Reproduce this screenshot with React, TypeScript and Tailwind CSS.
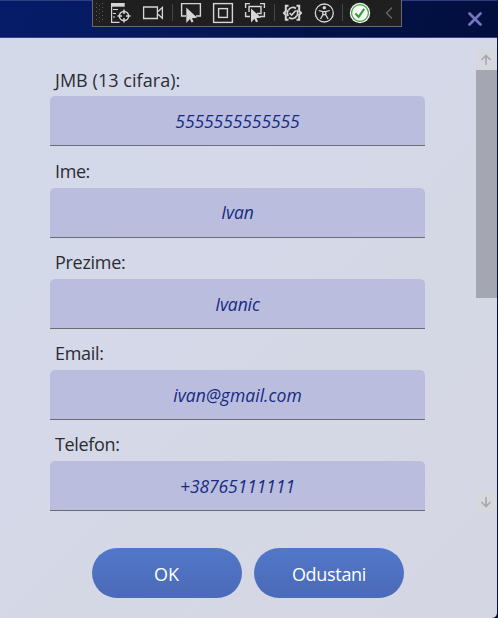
import React from "react";

const fields = [
  { label: "JMB (13 cifara):", value: "5555555555555", labelTrack: "tracking-[0.05px] mb-[3px]", valueTrack: "tracking-[-0.08px] pt-px", height: "h-[92px]" },
  { label: "Ime:", value: "Ivan", labelTrack: "tracking-[-0.4px] -mt-px mb-1", valueTrack: "tracking-[-0.1px]", height: "h-[91px]" },
  { label: "Prezime:", value: "Ivanic", labelTrack: "tracking-[-0.3px] -mt-px mb-1", valueTrack: "tracking-[-0.1px] pt-px", height: "h-[91px]" },
  { label: "Email:", value: "ivan@gmail.com", labelTrack: "tracking-[-0.3px] -mt-px mb-1", valueTrack: "tracking-[0.05px] pt-px", height: "h-[91px]" },
  { label: "Telefon:", value: "+38765111111", labelTrack: "tracking-[-0.35px] -mt-px mb-1", valueTrack: "tracking-[-0.08px] pt-px", height: "h-[91px]" },
];

function DebugToolbar() {
  return (
    <div className="absolute -top-px left-[92px] h-[27px] w-[310px] border-x border-b border-[#69686c] bg-[#1f1f1f]">
      <svg className="absolute -left-px top-0" width="310" height="25" viewBox="92 0 310 25" fill="none" stroke="#d6d6d6">
        {/* drag grip */}
        <path d="M96.500 3v20M102.500 3v20" stroke="#5e5e5e" strokeDasharray="1 3" />
        <path d="M99.500 5v18" stroke="#5e5e5e" strokeDasharray="1 3" />
        {/* live visual tree */}
        <path d="M111 3h13.700v3.700H111z" fill="#d6d6d6" stroke="none" />
        <path d="M111.600 4v18.400h7.900" strokeWidth="1.200" />
        <path d="M113 9.500h5M113 13.500h3M113 17h2" strokeWidth="1.200" />
        <circle cx="124" cy="16" r="4.600" strokeWidth="1.500" />
        <path d="M124 9.500v4.500M124 18v4.500M117.500 16h4.500M126 16h4.500" strokeWidth="1.500" />
        {/* camera */}
        <path d="M143.600 7h13.800v11.500h-13.800z" strokeWidth="1.300" />
        <path d="M158 11.500l4.400-4v10.800l-4.400-4" strokeWidth="1.300" />
        <path d="M172.500 4v17" stroke="#464646" />
        {/* element picker */}
        <path d="M186 16h-4.400V3.600h18.800V16H196" strokeWidth="1.400" />
        <path d="M186.300 7.500v15.500l3.700-4 1.500 3.600 2-.8-1.500-3.600 5.200-.4z" fill="#d6d6d6" stroke="none" />
        {/* layout adorners */}
        <rect x="213.600" y="3.600" width="18.800" height="18.800" strokeWidth="1.400" />
        <rect x="218.600" y="8.600" width="8.800" height="8.800" strokeWidth="1.400" />
        {/* focus tracking */}
        <path d="M245.600 8V3.600h4.400M260 3.600h4.400V8M264.400 12v4.500H260M250 16.500h-4.400V12" strokeWidth="1.400" />
        <path d="M249 12V6.500h12v7h-4" strokeWidth="1.400" />
        <path d="M251 8.500v14l3.400-3.800 1.600 3.500 2-.8-1.500-3.500 4.800-.2z" fill="#d6d6d6" stroke="none" />
        <path d="M274.500 4v17" stroke="#464646" />
        {/* hot reload */}
        <path d="M288.500 5.700h-2.700v5.300l-1.800 2 1.800 2v4.700h2.700M296.500 5.700h2.700v5.300l1.800 2-1.800 2v4.700h-2.700" strokeWidth="2" />
        <path d="M288.500 10a5 5 0 0 1 7.500-1.500M296.500 16a5 5 0 0 1-7.500 1.500M288.200 10a5.500 5.500 0 0 0 0 6M296.800 10a5.500 5.500 0 0 1 0 6" strokeWidth="1.600" />
        <path d="M289.500 13l2.200 2 4-4.500" strokeWidth="1.600" />
        {/* accessibility */}
        <circle cx="324.300" cy="13" r="9" strokeWidth="1.300" />
        <circle cx="324.300" cy="7.700" r="1.700" fill="#d6d6d6" stroke="none" />
        <path d="M318.800 10.500l4 1.200h3l4-1.200M322.800 11.700v3.300L320.500 19M325.800 11.700v3.300l2.300 4M322.800 14.500h3" strokeWidth="1.300" />
        <path d="M342.500 4v17" stroke="#464646" />
        <circle cx="360" cy="13" r="10.200" fill="#f5f8f5" stroke="none" />
        <circle cx="360" cy="13" r="8.400" stroke="#3d9b3c" strokeWidth="1.200" />
        <path d="M355.300 13.500l3.400 3.400 5.500-8" stroke="#319b32" strokeWidth="2" />
        <path d="M392 7.500l-5.500 5.500 5.500 5.500" stroke="#686868" strokeWidth="1.300" />
      </svg>
    </div>
  );
}

function Arrow({ down = false }: { down?: boolean }) {
  return (
    <div className="flex h-5 w-[21px] items-center bg-[#d7d8de] pl-1">
      <svg width="12" height="12" viewBox="0 0 12 12" fill="none" stroke="#a6a8b1" strokeWidth="1.600" className={down ? "rotate-180" : ""}>
        <path d="M6 11V2M1.500 6L6 1.500 10.500 6" />
      </svg>
    </div>
  );
}

export default function App() {
  return (
    <div className="h-[618px] w-[498px] overflow-hidden bg-[#020f43] pr-px font-['Open_Sans','Noto_Sans',sans-serif]">
      <div className="flex h-full flex-col overflow-hidden rounded-br-[5px] bg-[linear-gradient(135deg,#d4d9ea_0%,#d4d9e9_25%,#d5d8e8_45%,#d4d8e4_65%,#d5d7e5_78%,#d5d6e3_100%)]">
        <header className="relative flex h-[38px] shrink-0 items-center justify-end border-b border-t border-b-[#35457f] border-t-[#2e3e7e] bg-[linear-gradient(100deg,#061c6a_0%,#051a60_25%,#021248_65%,#020e3d_100%)] pr-[15px]">
          <DebugToolbar />
          <svg width="14" height="14" viewBox="0 0 14 14" fill="none" stroke="#7773c2" strokeWidth="2.700" strokeLinecap="round">
            <path d="M1.500 1.500l11 11M12.500 1.500l-11 11" />
          </svg>
        </header>
        <main className="mt-3 flex h-[462px] shrink-0 justify-between pl-[50px]">
          <div className="w-[375px] pt-[18px]">
            {fields.map((f) => (
              <div key={f.label} className={`flex flex-col ${f.height}`}>
                <div className={`pl-[5px] text-[18px] leading-[25px] text-[#2b2c32] ${f.labelTrack}`}>{f.label}</div>
                <div className={`flex h-[50px] shrink-0 items-center justify-center rounded-t-[5px] border-b border-[#6b6c73] bg-[#bbbddf] text-[17.500px] italic text-[#152b80] ${f.valueTrack}`}>
                  {f.value}
                </div>
              </div>
            ))}
          </div>
          <div className="flex w-[21px] flex-col">
            <Arrow />
            <div className="h-[228px] bg-[#a4a6b1]" />
            <div className="flex-1" />
            <Arrow down />
          </div>
        </main>
        <footer className="flex gap-3 pl-[92px] pt-9 text-[18px] text-white">
          <button className="h-[50px] w-[150px] rounded-full bg-linear-to-b from-[#5277ca] to-[#4b6ab7] pr-px pt-[3px] tracking-[-0.1px]">OK</button>
          <button className="h-[50px] w-[150px] rounded-full bg-linear-to-b from-[#5277ca] to-[#4b6ab7] pt-[3px] tracking-[-0.3px]">Odustani</button>
        </footer>
      </div>
    </div>
  );
}
